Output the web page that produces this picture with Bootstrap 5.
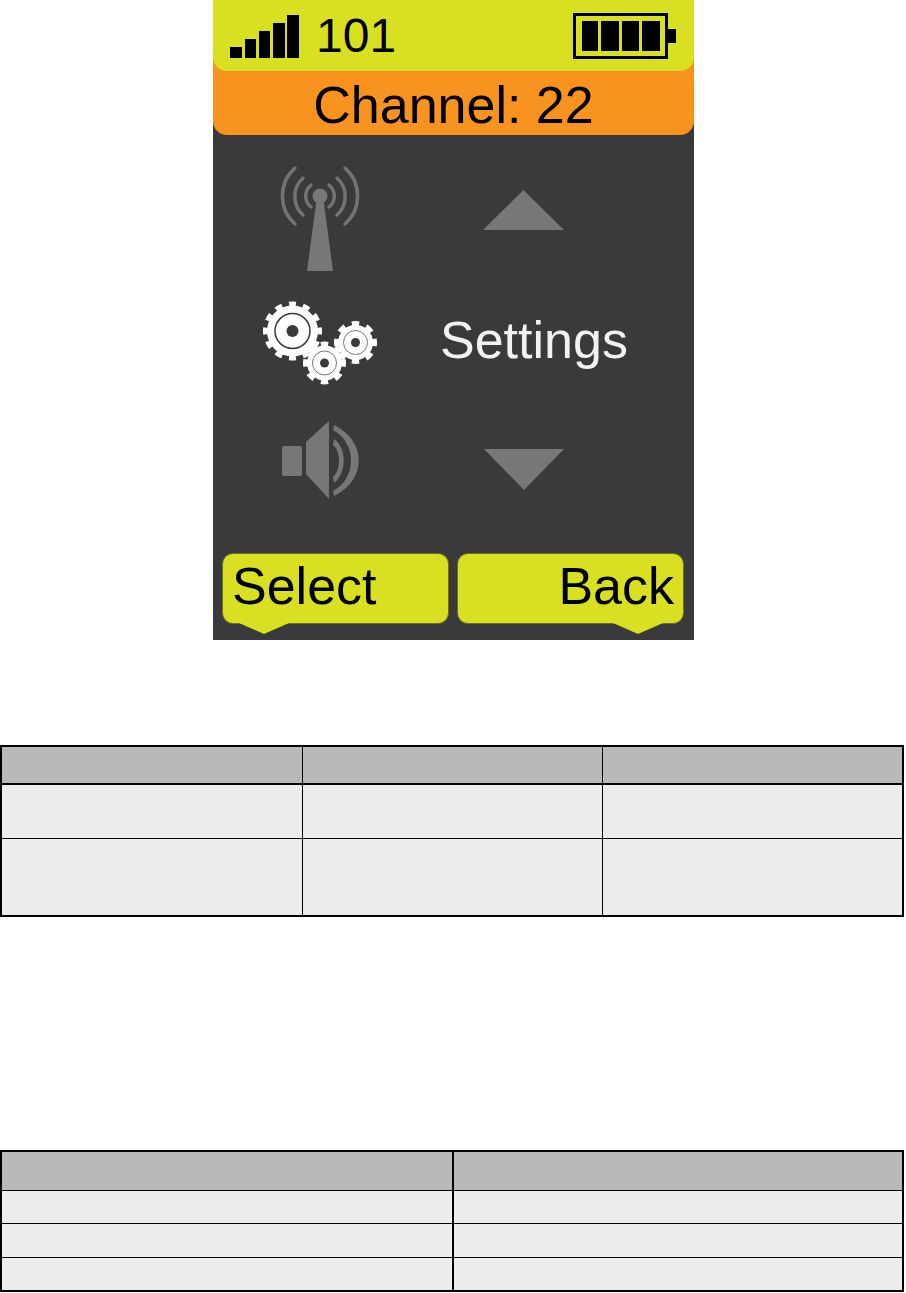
<!DOCTYPE html>
<html lang="en">
<head>
  <meta charset="UTF-8">
  <meta name="viewport" content="width=device-width, initial-scale=1">
  <title>Handset menu - Settings</title>
  <link href="https://cdn.jsdelivr.net/npm/bootstrap@5.3.3/dist/css/bootstrap.min.css" rel="stylesheet">
  <style>
    body {
      background: #fff;
      font-family: "Liberation Sans", Arial, sans-serif;
    }
    .handset {
      width: 481px;
      height: 640px;
      margin-left: 213px;
      background: #3a3a3c;
      color: #000;
    }
    .status-wrap {
      background: #f7931e;
      border-radius: 0 0 14px 14px;
    }
    .status-top {
      height: 71px;
      padding: 13px 18px 12px 17px;
      background: #d9e021;
      border-radius: 0 0 14px 14px;
    }
    .status-num {
      font-size: 48px;
      line-height: 46px;
      margin-left: 16px;
    }
    .status-channel {
      height: 64px;
      font-size: 52px;
      line-height: 68px;
    }
    .menu-grid {
      display: grid;
      grid-template-columns: 214px 1fr;
      grid-template-rows: 120px 115px 122px;
      padding-top: 30px;
    }
    .menu-label {
      padding: 0 0 5px 13px;
      font-size: 52px;
      color: #f2f2f2;
    }
    .soft-icon { filter: blur(.5px); }
    .arrow-up { margin: 25px 0 0 56px; }
    .arrow-down { margin: 49px 0 0 57px; }
    .speaker-cell { padding-top: 20px; }
    .soft-row {
      margin-top: 31px;
      padding: 0 10px 0 9px;
      gap: 8px;
    }
    .soft-btn {
      position: relative;
      width: 227px;
      height: 71px;
      padding: 0 9px;
      background: #d9e021;
      border: 1px solid #6f7020;
      border-radius: 11px;
      font-size: 52px;
      line-height: 64px;
    }
    .soft-btn::after {
      content: "";
      position: absolute;
      top: 100%;
      width: 50px;
      height: 11px;
      background: #d9e021;
      clip-path: polygon(0 0, 100% 0, 50% 100%);
    }
    .soft-left::after { left: 16px; }
    .soft-right::after { right: 20px; }
    .spec-table {
      --bs-table-border-color: #000;
      --bs-table-bg: #ececec;
      width: 904px;
      table-layout: fixed;
      border: 2px solid #000;
    }
    .spec-table > :not(caption) > * > * {
      padding: 0;
      border: 1px solid #000;
    }
    .spec-table thead th {
      --bs-table-bg: #b9b9b9;
      border-bottom-width: 2px;
    }
    .table-one { margin-top: 105px; }
    .table-one thead tr { height: 38px; }
    .table-one .row-a { height: 54px; }
    .table-one .row-b { height: 78px; }
    .table-two { margin-top: 233px; }
    .table-two .col-split { border-right-width: 2px; }
    .table-two thead th { border-bottom-width: 1px; }
    .table-two thead tr { height: 39px; }
    .table-two tbody tr { height: 33.5px; }
  </style>
</head>
<body>

<!-- Pantalla del terminal -->
<div class="handset d-flex flex-column">
  <div class="status-wrap">
    <div class="status-top d-flex align-items-end justify-content-between">
      <div class="d-flex align-items-end">
        <svg width="70" height="44" viewBox="230 16 70 44" fill="#000" aria-hidden="true">
          <rect x="230" y="48" width="12" height="11"/>
          <rect x="245" y="40" width="11" height="19"/>
          <rect x="259" y="32" width="11" height="27"/>
          <rect x="273" y="24" width="12" height="35"/>
          <rect x="287" y="16" width="12" height="43"/>
        </svg>
        <span class="status-num">101</span>
      </div>
      <svg width="103" height="46" viewBox="573 13 103 46" aria-hidden="true">
        <rect x="574.5" y="14.5" width="92" height="43" fill="none" stroke="#000" stroke-width="3"/>
        <rect x="668" y="29" width="8" height="14" fill="#000"/>
        <rect x="582" y="21" width="16" height="30" fill="#000"/>
        <rect x="601" y="21" width="18" height="30" fill="#000"/>
        <rect x="622" y="21" width="17" height="30" fill="#000"/>
        <rect x="642" y="21" width="18" height="30" fill="#000"/>
      </svg>
    </div>
    <div class="status-channel text-center">Channel: 22</div>
  </div>

  <div class="menu-grid">
    <div class="d-flex justify-content-center align-items-start">
      <svg class="soft-icon" width="90" height="110" viewBox="275 165 90 110" fill="none" stroke="#737375" stroke-width="3.5" stroke-linecap="round" aria-hidden="true">
        <path d="M295 168A37.5 37.5 0 0 0 295 224M345 168A37.5 37.5 0 0 1 345 224"/>
        <path d="M303 178A25 25 0 0 0 303 215M337 178A25 25 0 0 1 337 215"/>
        <path d="M311 185A14 14 0 0 0 311 207M329 185A14 14 0 0 1 329 207"/>
        <circle cx="320" cy="196" r="7.5" fill="#77777a" stroke="none"/>
        <path d="M316.500 200H323.500L333 271H307Z" fill="#77777a" stroke="none"/>
      </svg>
    </div>
    <div>
      <svg class="arrow-up d-block" width="81" height="40" viewBox="0 0 81 40" aria-hidden="true">
        <path d="M40.500 0L81 40H0Z" fill="#77777a"/>
      </svg>
    </div>

    <div class="d-flex justify-content-center align-items-center">
      <svg class="soft-icon" width="116" height="90" viewBox="263 298 116 90" aria-hidden="true">
        <!-- engranaje grande -->
        <g transform="rotate(-90 293.500 331)">
          <circle cx="293.500" cy="331" r="27" fill="none" stroke="#fff" stroke-width="5" pathLength="24" stroke-dasharray="1 1" stroke-dashoffset=".5"/>
        </g>
        <circle cx="293.500" cy="331" r="25.500" fill="#fff"/>
        <circle cx="293.500" cy="331" r="17.500" fill="none" stroke="#3a3a3c" stroke-width="1.500"/>
        <circle cx="293.500" cy="331" r="6" fill="#3a3a3c"/>
        <!-- engranaje derecho -->
        <g transform="rotate(-90 356.500 342.500)">
          <circle cx="356.500" cy="342.500" r="19" fill="none" stroke="#fff" stroke-width="5" pathLength="16" stroke-dasharray="1 1" stroke-dashoffset=".5"/>
        </g>
        <circle cx="356.500" cy="342.500" r="17.500" fill="#fff"/>
        <circle cx="356.500" cy="342.500" r="12" fill="none" stroke="#77777a" stroke-width="1"/>
        <circle cx="356.500" cy="342.500" r="4.500" fill="#3a3a3c"/>
        <!-- engranaje inferior -->
        <g transform="rotate(-90 325.500 363)">
          <circle cx="325.500" cy="363" r="19" fill="none" stroke="#fff" stroke-width="5" pathLength="16" stroke-dasharray="1 1" stroke-dashoffset=".5"/>
        </g>
        <circle cx="325.500" cy="363" r="17.500" fill="#fff"/>
        <circle cx="325.500" cy="363" r="12" fill="none" stroke="#77777a" stroke-width="1"/>
        <circle cx="325.500" cy="363" r="4.500" fill="#3a3a3c"/>
      </svg>
    </div>
    <div class="menu-label d-flex align-items-center">Settings</div>

    <div class="speaker-cell d-flex justify-content-center align-items-start">
      <svg class="soft-icon" width="84" height="82" viewBox="279 421 84 82" fill="#77777a" aria-hidden="true">
        <rect x="283" y="447" width="20" height="30" rx="2"/>
        <path d="M307 443L330 422V500L307 475Z"/>
        <path d="M335 426C368 442 368 481 335 497L334 492C358 479 358 444 334 431Z"/>
        <path d="M335 440C348 449 348 474 335 484L334 478C342 471 342 452 334 446Z"/>
      </svg>
    </div>
    <div>
      <svg class="arrow-down d-block" width="80" height="41" viewBox="0 0 80 41" aria-hidden="true">
        <path d="M0 0H80L40 41Z" fill="#77777a"/>
      </svg>
    </div>
  </div>

  <div class="soft-row d-flex">
    <div class="soft-btn soft-left">Select</div>
    <div class="soft-btn soft-right text-end">Back</div>
  </div>
</div>

<!-- Tablas -->
<table class="table spec-table table-one mb-0">
  <colgroup><col style="width: 301px"><col style="width: 300px"><col></colgroup>
  <thead>
    <tr><th></th><th></th><th></th></tr>
  </thead>
  <tbody>
    <tr class="row-a"><td></td><td></td><td></td></tr>
    <tr class="row-b"><td></td><td></td><td></td></tr>
  </tbody>
</table>

<table class="table spec-table table-two mb-0">
  <colgroup><col style="width: 452px"><col></colgroup>
  <thead>
    <tr><th class="col-split"></th><th></th></tr>
  </thead>
  <tbody>
    <tr><td class="col-split"></td><td></td></tr>
    <tr><td class="col-split"></td><td></td></tr>
    <tr><td class="col-split"></td><td></td></tr>
  </tbody>
</table>

<script src="https://cdn.jsdelivr.net/npm/bootstrap@5.3.3/dist/js/bootstrap.bundle.min.js"></script>
</body>
</html>
